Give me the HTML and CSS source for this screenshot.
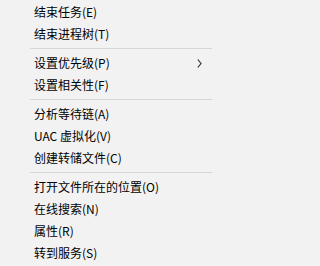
FILE: index.html
```html
<!DOCTYPE html>
<html lang="zh-CN">
<head>
<meta charset="utf-8">
<link rel="stylesheet" href="styles.css">
</head>
<body>
<div class="menu">
  <div class="item">结束任务(E)</div>
  <div class="item">结束进程树(T)</div>
  <div class="sep"></div>
  <div class="item sub">设置优先级(P)<svg class="chev" width="5" height="9" viewBox="0 0 5 9"><polyline points="0.8,0.5 4,4.5 0.8,8.5" fill="none" stroke="#333" stroke-width="1.2"/></svg></div>
  <div class="item">设置相关性(F)</div>
  <div class="sep"></div>
  <div class="item">分析等待链(A)</div>
  <div class="item">UAC 虚拟化(V)</div>
  <div class="item">创建转储文件(C)</div>
  <div class="sep"></div>
  <div class="item">打开文件所在的位置(O)</div>
  <div class="item">在线搜索(N)</div>
  <div class="item">属性(R)</div>
  <div class="item">转到服务(S)</div>
</div>
</body>
</html>
```

FILE: styles.css
```css
html, body {
  margin: 0;
  padding: 0;
  background: #f2f2f2;
}
.menu {
  width: 214px;
  height: 266px;
  padding-top: 1px;
  box-sizing: border-box;
  background: #f2f2f2;
  font-family: "Noto Sans CJK SC", "Microsoft YaHei", sans-serif;
  font-size: 12px;
  color: #000;
  overflow: hidden;
}
.item {
  height: 22px;
  line-height: 22px;
  padding-left: 34px;
  display: flex;
  align-items: center;
  white-space: nowrap;
}
.sub {
  justify-content: space-between;
  padding-right: 12px;
}
.chev {
  display: block;
}
.sep {
  height: 1px;
  margin: 3px 2px 3px 30px;
  background: #d7d7d7;
}
```
